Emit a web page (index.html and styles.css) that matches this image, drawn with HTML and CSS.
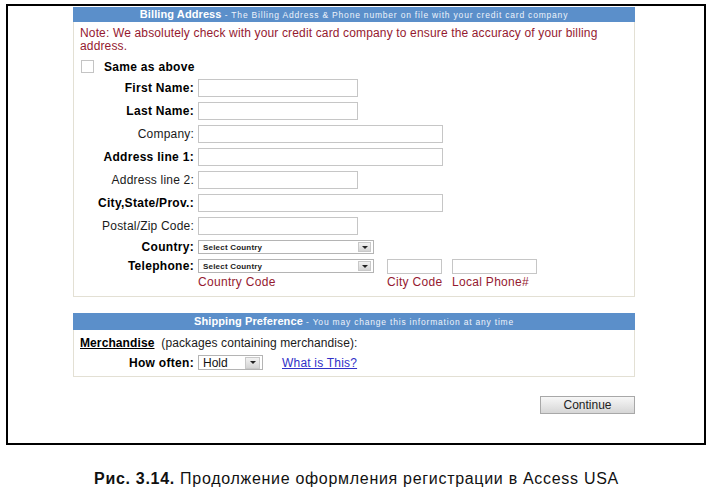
FILE: index.html
```html
<!DOCTYPE html>
<html>
<head>
<meta charset="utf-8">
<link rel="stylesheet" href="styles.css">
</head>
<body>
<div class="frame">
  <div class="panel billing">
    <div class="phead"><b>Billing Address</b><span class="sub"> - The Billing Address &amp; Phone number on file with your credit card company</span></div>
    <div class="pbody">
      <div class="note">Note: We absolutely check with your credit card company to ensure the accuracy of your billing address.</div>
      <div class="same"><span class="cb"></span><b>Same as above</b></div>
      <div class="row"><label class="lbl b">First Name:</label><span class="inp short"></span></div>
      <div class="row"><label class="lbl b">Last Name:</label><span class="inp short"></span></div>
      <div class="row"><label class="lbl">Company:</label><span class="inp long"></span></div>
      <div class="row"><label class="lbl b">Address line 1:</label><span class="inp long"></span></div>
      <div class="row"><label class="lbl">Address line 2:</label><span class="inp short"></span></div>
      <div class="row"><label class="lbl b">City,State/Prov.:</label><span class="inp long"></span></div>
      <div class="row"><label class="lbl">Postal/Zip Code:</label><span class="inp short"></span></div>
      <div class="row rsel"><label class="lbl b">Country:</label><span class="sel country"><span class="stxt">Select Country</span><span class="arr"><i></i></span></span></div>
      <div class="row rtel"><label class="lbl b">Telephone:</label>
        <div class="telgrid">
          <span class="sel country"><span class="stxt">Select Country</span><span class="arr"><i></i></span></span>
          <span class="inp city"></span>
          <span class="inp local"></span>
          <span class="cap">Country Code</span>
          <span class="cap">City Code</span>
          <span class="cap">Local Phone#</span>
        </div>
      </div>
    </div>
  </div>
  <div class="panel shipping">
    <div class="phead tall"><b>Shipping Preference</b><span class="sub"> - You may change this information at any time</span></div>
    <div class="sbody">
      <div class="merch"><b class="u">Merchandise</b>&nbsp; (packages containing merchandise):</div>
      <div class="row often"><label class="lbl b">How often:</label><span class="sel hold"><span class="htxt">Hold</span><span class="arr big"><i></i></span></span><a class="link" href="#">What is This?</a></div>
    </div>
  </div>
  <div class="actions"><span class="btn">Continue</span></div>
</div>
<p class="caption"><b>Рис. 3.14.</b> Продолжение оформления регистрации в Access USA</p>
</body>
</html>
```
FILE: styles.css
```css
body {
  margin: 0;
  background: #fff;
  font-family: "Liberation Sans", Arial, sans-serif;
  color: #000;
}
.frame {
  margin: 4px 0 0 6px;
  width: 700px;
  height: 441px;
  border: 2px solid #000;
  box-sizing: border-box;
}
.panel {
  margin-left: 65px;
  width: 562px;
  border: 1px solid #e3e0d4;
  border-top: none;
  box-sizing: border-box;
  background: #fff;
}
.billing { margin-top: 1px; }
.shipping { margin-top: 16px; }
.phead {
  height: 15px;
  margin: 0 -1px;
  background: #5b8fca;
  color: #fff;
  text-align: center;
  font-size: 11px;
  line-height: 15px;
  white-space: nowrap;
}
.phead.tall { height: 17px; line-height: 17px; }
.phead b { font-weight: bold; letter-spacing: 0.1px; }
.sub { font-size: 8.5px; letter-spacing: 0.8px; color: #eef3fb; }
.pbody { padding: 5px 7px 7px 6px; }
.note {
  color: #951a30;
  font-size: 12px;
  line-height: 13px;
  letter-spacing: 0.15px;
}
.same {
  margin-top: 7px;
  height: 13px;
  display: flex;
  align-items: center;
  font-size: 12px;
  letter-spacing: 0.3px;
}
.cb {
  width: 13px;
  height: 13px;
  margin-left: 1px;
  margin-right: 10px;
  border: 1px solid #c4c4c4;
  box-sizing: border-box;
  background: #fff;
}
.row {
  display: flex;
  align-items: center;
  margin-top: 5px;
  height: 18px;
}
.same + .row { margin-top: 6px; }
.lbl {
  width: 114px;
  margin-right: 4px;
  text-align: right;
  font-size: 12px;
  white-space: nowrap;
  color: #1a1a1a;
  letter-spacing: 0.2px;
}
.lbl.b { font-weight: bold; color: #000; letter-spacing: 0.3px; }
.inp {
  display: block;
  height: 18px;
  border: 1px solid #c6c6c6;
  box-sizing: border-box;
  background: #fff;
}
.short { width: 160px; }
.long { width: 245px; }
.rsel { height: 14px; }
.rtel { height: auto; align-items: flex-start; }
.rtel .lbl { line-height: 14px; }
.sel {
  display: flex;
  align-items: center;
  justify-content: space-between;
  border: 1px solid #b4b4b4;
  box-sizing: border-box;
  background: #fff;
}
.country { width: 176px; height: 14px; }
.stxt {
  font-size: 8px;
  font-weight: bold;
  color: #222;
  padding-left: 4px;
  letter-spacing: 0.2px;
}
.arr {
  width: 13px;
  height: 10px;
  margin-right: 2px;
  background: linear-gradient(#f2f2f2, #d4d4d4);
  border: 1px solid #c8c8c8;
  box-sizing: border-box;
  display: flex;
  align-items: center;
  justify-content: center;
}
.arr i {
  width: 0;
  height: 0;
  border-left: 3px solid transparent;
  border-right: 3px solid transparent;
  border-top: 3px solid #222;
}
.arr.big { width: 15px; height: 12px; }
.telgrid {
  display: grid;
  grid-template-columns: 176px 55px 84px;
  grid-template-rows: 17px 13px;
  column-gap: 13px;
}
.telgrid .local { margin-left: -3px; }
.city { width: 55px; height: 15px; }
.local { width: 85px; height: 15px; }
.cap {
  color: #951a30;
  font-size: 12px;
  line-height: 13px;
  letter-spacing: 0.3px;
  white-space: nowrap;
}
.telgrid .cap:last-child { margin-left: -3px; }
.sbody { padding: 7px 7px 6px 6px; }
.merch {
  font-size: 12px;
  line-height: 13px;
  letter-spacing: 0.1px;
  color: #1a1a1a;
}
.u { text-decoration: underline; color: #000; }
.often { margin-top: 5px; height: 15px; }
.hold { width: 65px; height: 15px; }
.htxt { font-size: 12px; padding-left: 4px; color: #111; }
.link {
  margin-left: 19px;
  font-size: 12px;
  color: #3030c8;
  text-decoration: underline;
  letter-spacing: 0.2px;
}
.actions {
  display: flex;
  justify-content: flex-end;
  width: 627px;
  margin-top: 19px;
}
.btn {
  width: 95px;
  height: 18px;
  box-sizing: border-box;
  border: 1px solid #a8a8a8;
  background: linear-gradient(#f7f7f7, #d6d6d6);
  font-size: 12px;
  line-height: 16px;
  text-align: center;
  color: #222;
}
.caption {
  margin: 24px 0 0;
  text-align: center;
  font-size: 16px;
  line-height: 20px;
  color: #111;
  letter-spacing: 0.7px;
}
```
